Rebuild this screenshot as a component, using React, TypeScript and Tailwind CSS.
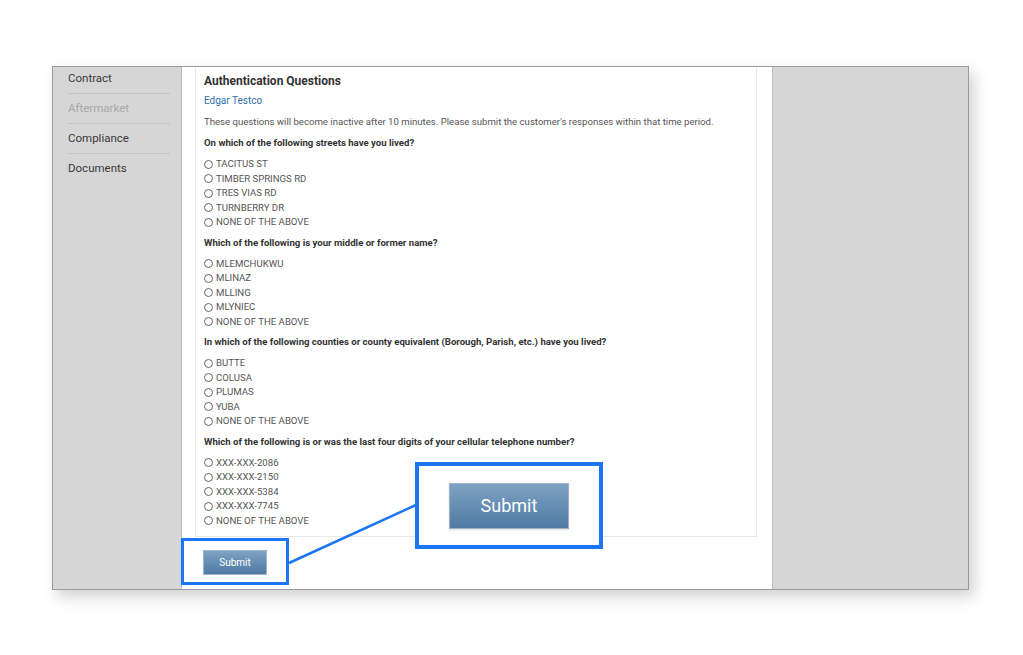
import React from "react";

const groups: { q: string; opts: string[] }[] = [
  {
    q: "On which of the following streets have you lived?",
    opts: ["TACITUS ST", "TIMBER SPRINGS RD", "TRES VIAS RD", "TURNBERRY DR", "NONE OF THE ABOVE"],
  },
  {
    q: "Which of the following is your middle or former name?",
    opts: ["MLEMCHUKWU", "MLINAZ", "MLLING", "MLYNIEC", "NONE OF THE ABOVE"],
  },
  {
    q: "In which of the following counties or county equivalent (Borough, Parish, etc.) have you lived?",
    opts: ["BUTTE", "COLUSA", "PLUMAS", "YUBA", "NONE OF THE ABOVE"],
  },
  {
    q: "Which of the following is or was the last four digits of your cellular telephone number?",
    opts: ["XXX-XXX-2086", "XXX-XXX-2150", "XXX-XXX-5384", "XXX-XXX-7745", "NONE OF THE ABOVE"],
  },
];

const nav = [
  { label: "Contract", muted: false },
  { label: "Aftermarket", muted: true },
  { label: "Compliance", muted: false },
  { label: "Documents", muted: false },
];

export default function App() {
  return (
    <div
      className="relative w-[1023px] h-[655px] bg-white pt-[66px] pl-[52px] overflow-hidden"
      style={{ fontFamily: "Roboto, 'Liberation Sans', Arial, sans-serif" }}
    >
      <div className="flex w-[917px] h-[524px] border border-[#9b9b9b] shadow-[5px_7px_14px_rgba(0,0,0,0.18)]">
        {/* Sidebar */}
        <div className="w-[129px] bg-[#d6d6d6] border-r border-[#bdbdbd] pl-[15px] pr-[11px]">
          <div className="-mt-[3px]">
            {nav.map((n, i) => (
              <div
                key={n.label}
                className={`h-[30px] flex items-center text-[11.5px] ${
                  n.muted ? "text-[#a9a9a9]" : "text-[#3a3a3a]"
                } ${i < nav.length - 1 ? "border-b border-[#c3c3c3]" : ""}`}
              >
                {n.label}
              </div>
            ))}
          </div>
        </div>

        {/* Main */}
        <div className="w-[590px] bg-white pl-[13px] pr-[15px]">
          <div className="border-l border-r border-b border-[#e8e8e8] pl-[8px] pt-[6px] pb-[8px] text-[#444]">
            <div className="text-[12px] leading-[16px] font-bold text-[#333]">Authentication Questions</div>
            <div className="mt-[5px] text-[10px] leading-[14px] text-[#2f6fad]">Edgar Testco</div>
            <div className="mt-[7px] text-[9.6px] leading-[14px] text-[#555]">
              These questions will become inactive after 10 minutes. Please submit the customer's responses within that time period.
            </div>
            {groups.map((g, gi) => (
              <div key={gi} className={gi === 0 ? "mt-[7px]" : "mt-[6px]"}>
                <div className="text-[9.6px] leading-[14px] font-bold text-[#333]">{g.q}</div>
                <div className="mt-[7px]">
                  {g.opts.map((o) => (
                    <div key={o} className="flex items-center h-[14.5px] text-[9.6px] text-[#555]">
                      <span className="inline-block w-[9px] h-[9px] rounded-full border border-[#666] mr-[3px] bg-white" />
                      {o}
                    </div>
                  ))}
                </div>
              </div>
            ))}
          </div>
          <button className="mt-[13px] ml-[8px] w-[64px] h-[25px] bg-gradient-to-b from-[#7ea2c3] to-[#4e7aa3] border border-[#9fb5c9] text-white text-[10px] flex items-center justify-center">
            Submit
          </button>
        </div>

        {/* Right panel */}
        <div className="flex-1 bg-[#d6d6d6] border-l border-[#bdbdbd]" />
      </div>

      {/* Callout overlays */}
      <div className="absolute left-[181px] top-[538px] w-[108px] h-[47px] border-[3px] border-[#1a76f2]" />
      <svg className="absolute left-0 top-0" width="1023" height="655" style={{ pointerEvents: "none" }}>
        <line x1="289" y1="563" x2="416" y2="505" stroke="#1a76f2" strokeWidth="2.5" />
      </svg>
      <div className="absolute left-[415px] top-[462px] w-[188px] h-[87px] border-[4px] border-[#1a76f2] bg-white flex items-center justify-center">
        <div className="w-[120px] h-[46px] bg-gradient-to-b from-[#7ea2c3] to-[#4f7ba4] border border-[#9fb5c9] text-white text-[18px] flex items-center justify-center shadow-[0_1px_2px_rgba(0,0,0,0.15)]">
          Submit
        </div>
      </div>
    </div>
  );
}
